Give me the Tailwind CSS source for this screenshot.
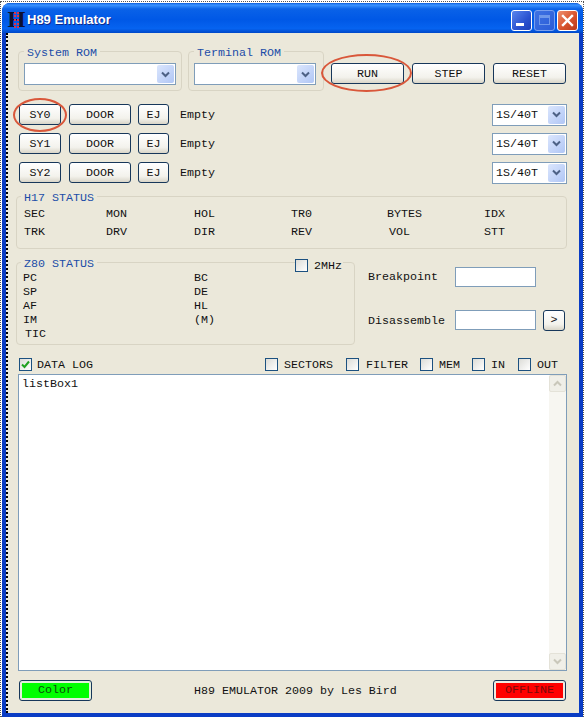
<!doctype html>
<html lang="en">
  <head>
    <meta charset="UTF-8">
    <title>H89 Emulator</title>
    <script src="https://cdn.jsdelivr.net/npm/@tailwindcss/browser@4"></script>
  </head>
  <body class="relative w-[585px] h-[718px] overflow-hidden bg-white font-['Liberation_Mono',monospace] text-[11.67px] leading-[14px] text-[#111]">
    <!-- screenshot selection edge -->
    <div class="absolute left-0 top-[1px] w-[584px] h-[716px] border border-dotted border-[#555]"></div>

    <!-- window -->
    <div class="relative ml-[2px] mt-[3px] w-[581px] h-[714px] flex flex-col rounded-t-[8px] bg-[#0a3cc4] overflow-hidden">
      <!-- title bar -->
      <div class="h-[30px] shrink-0 flex items-center pl-[6px] pr-[5px] pt-[4px] bg-[linear-gradient(180deg,#0a5ee0_0%,#3a93ff_7%,#0a62e8_20%,#0058e6_55%,#0663f0_85%,#0048c8_100%)]">
        <div class="relative w-[17px] h-[18px] flex items-center justify-center">
          <span class="font-['Liberation_Serif',serif] font-bold text-[23px] leading-[18px] text-[#0c1030]">H</span>
          <div class="absolute left-[6px] top-[1px] w-[5px] h-[16px] border-x-2 border-dotted border-[#d8344a]"></div>
        </div>
        <span class="ml-[2px] font-['Liberation_Sans',sans-serif] font-bold text-[13px] text-white [text-shadow:1px_1px_#0f2a89]">H89 Emulator</span>
        <div class="ml-auto flex gap-[2px]">
          <div class="relative w-[21px] h-[21px] rounded-[3px] border border-white bg-[linear-gradient(135deg,#5a86ee,#2a52d0_60%,#1c3fb8)]">
            <div class="absolute left-[4px] bottom-[4px] w-[8px] h-[3px] bg-white"></div>
          </div>
          <div class="w-[21px] h-[21px] rounded-[3px] border border-[#7aa0ee] bg-[linear-gradient(135deg,#3f72e2,#2a5cd8)] flex items-center justify-center">
            <div class="w-[11px] h-[10px] border border-[#6f98ea] border-t-[3px]"></div>
          </div>
          <div class="w-[21px] h-[21px] rounded-[3px] border border-white bg-[linear-gradient(135deg,#ee9070,#d8532c_55%,#b83a1c)] flex items-center justify-center">
            <svg width="13" height="13" viewBox="0 0 13 13"><path d="M2 2 L11 11 M11 2 L2 11" stroke="#fff" stroke-width="2.4" stroke-linecap="square" /></svg>
          </div>
        </div>
      </div>

      <!-- client area -->
      <div class="relative ml-[4px] w-[573px] h-[680px] shrink-0 bg-[#ebe8da] pl-[9px] pt-[18px] border-l-2 border-dotted border-black">
        <div class="-ml-px">
          <!-- ROM groups and run buttons -->
          <div class="flex items-start h-[40px]">
            <div class="relative ml-[2px] w-[164px] h-[40px] rounded-[4px] border border-[#d8d4c4]">
              <span class="absolute left-[5px] -top-[6px] px-[3px] bg-[#ebe8da] text-[#1c4da8]">System ROM</span>
              <div class="absolute left-[5px] top-[11px] w-[152px] h-[22px] border border-[#7f9db9] bg-white flex justify-end items-center pr-[1px]">
                <div class="w-[17px] h-[18px] rounded-[2px] bg-[linear-gradient(135deg,#dbe6fd,#b0c6f5)] flex items-center justify-center">
                  <svg width="9" height="7" viewBox="0 0 9 7"><path d="M1 1.5 L4.5 5 L8 1.5" fill="none" stroke="#4d6185" stroke-width="2" /></svg>
                </div>
              </div>
            </div>
            <div class="relative ml-[6px] w-[136px] h-[40px] rounded-[4px] border border-[#d8d4c4]">
              <span class="absolute left-[5px] -top-[6px] px-[3px] bg-[#ebe8da] text-[#1c4da8]">Terminal ROM</span>
              <div class="absolute left-[5px] top-[11px] w-[122px] h-[22px] border border-[#7f9db9] bg-white flex justify-end items-center pr-[1px]">
                <div class="w-[17px] h-[18px] rounded-[2px] bg-[linear-gradient(135deg,#dbe6fd,#b0c6f5)] flex items-center justify-center">
                  <svg width="9" height="7" viewBox="0 0 9 7"><path d="M1 1.5 L4.5 5 L8 1.5" fill="none" stroke="#4d6185" stroke-width="2" /></svg>
                </div>
              </div>
            </div>
            <button class="ml-[7px] mt-[12px] w-[73px] h-[21px] rounded-[3px] border border-[#17375a] bg-[linear-gradient(180deg,#fff,#f3f2ec_70%,#d9d5c8)]">RUN</button>
            <button class="ml-[8px] mt-[12px] w-[73px] h-[21px] rounded-[3px] border border-[#17375a] bg-[linear-gradient(180deg,#fff,#f3f2ec_70%,#d9d5c8)]">STEP</button>
            <button class="ml-[8px] mt-[12px] w-[73px] h-[21px] rounded-[3px] border border-[#17375a] bg-[linear-gradient(180deg,#fff,#f3f2ec_70%,#d9d5c8)]">RESET</button>
          </div>

          <!-- drive rows -->
          <div class="mt-[13px] flex flex-col gap-[8px]">
            <div class="flex items-center h-[21px]">
              <button class="ml-[3px] w-[42px] h-[21px] rounded-[3px] border border-[#17375a] bg-[linear-gradient(180deg,#fff,#f3f2ec_70%,#d9d5c8)]">SY0</button>
              <button class="ml-[8px] w-[62px] h-[21px] rounded-[3px] border border-[#17375a] bg-[linear-gradient(180deg,#fff,#f3f2ec_70%,#d9d5c8)]">DOOR</button>
              <button class="ml-[7px] w-[31px] h-[21px] rounded-[3px] border border-[#17375a] bg-[linear-gradient(180deg,#fff,#f3f2ec_70%,#d9d5c8)]">EJ</button>
              <span class="ml-[11px]">Empty</span>
              <div class="ml-auto mr-[12px] w-[75px] h-[22px] border border-[#7f9db9] bg-white flex items-center pl-[3px] pr-[1px]">
                <span>1S/40T</span>
                <div class="ml-auto w-[17px] h-[18px] rounded-[2px] bg-[linear-gradient(135deg,#dbe6fd,#b0c6f5)] flex items-center justify-center">
                  <svg width="9" height="7" viewBox="0 0 9 7"><path d="M1 1.5 L4.5 5 L8 1.5" fill="none" stroke="#4d6185" stroke-width="2" /></svg>
                </div>
              </div>
            </div>
            <div class="flex items-center h-[21px]">
              <button class="ml-[3px] w-[42px] h-[21px] rounded-[3px] border border-[#17375a] bg-[linear-gradient(180deg,#fff,#f3f2ec_70%,#d9d5c8)]">SY1</button>
              <button class="ml-[8px] w-[62px] h-[21px] rounded-[3px] border border-[#17375a] bg-[linear-gradient(180deg,#fff,#f3f2ec_70%,#d9d5c8)]">DOOR</button>
              <button class="ml-[7px] w-[31px] h-[21px] rounded-[3px] border border-[#17375a] bg-[linear-gradient(180deg,#fff,#f3f2ec_70%,#d9d5c8)]">EJ</button>
              <span class="ml-[11px]">Empty</span>
              <div class="ml-auto mr-[12px] w-[75px] h-[22px] border border-[#7f9db9] bg-white flex items-center pl-[3px] pr-[1px]">
                <span>1S/40T</span>
                <div class="ml-auto w-[17px] h-[18px] rounded-[2px] bg-[linear-gradient(135deg,#dbe6fd,#b0c6f5)] flex items-center justify-center">
                  <svg width="9" height="7" viewBox="0 0 9 7"><path d="M1 1.5 L4.5 5 L8 1.5" fill="none" stroke="#4d6185" stroke-width="2" /></svg>
                </div>
              </div>
            </div>
            <div class="flex items-center h-[21px]">
              <button class="ml-[3px] w-[42px] h-[21px] rounded-[3px] border border-[#17375a] bg-[linear-gradient(180deg,#fff,#f3f2ec_70%,#d9d5c8)]">SY2</button>
              <button class="ml-[8px] w-[62px] h-[21px] rounded-[3px] border border-[#17375a] bg-[linear-gradient(180deg,#fff,#f3f2ec_70%,#d9d5c8)]">DOOR</button>
              <button class="ml-[7px] w-[31px] h-[21px] rounded-[3px] border border-[#17375a] bg-[linear-gradient(180deg,#fff,#f3f2ec_70%,#d9d5c8)]">EJ</button>
              <span class="ml-[11px]">Empty</span>
              <div class="ml-auto mr-[12px] w-[75px] h-[22px] border border-[#7f9db9] bg-white flex items-center pl-[3px] pr-[1px]">
                <span>1S/40T</span>
                <div class="ml-auto w-[17px] h-[18px] rounded-[2px] bg-[linear-gradient(135deg,#dbe6fd,#b0c6f5)] flex items-center justify-center">
                  <svg width="9" height="7" viewBox="0 0 9 7"><path d="M1 1.5 L4.5 5 L8 1.5" fill="none" stroke="#4d6185" stroke-width="2" /></svg>
                </div>
              </div>
            </div>
          </div>

          <!-- H17 status -->
          <div class="relative mt-[13px] w-[551px] h-[53px] rounded-[4px] border border-[#d8d4c4] pl-[7px] pt-[10px]">
            <span class="absolute left-[4px] -top-[6px] px-[3px] bg-[#ebe8da] text-[#1c4da8]">H17 STATUS</span>
            <div class="grid grid-cols-[82px_88px_97px_96px_97px_1fr] gap-y-[4px]">
              <span>SEC</span><span>MON</span><span>HOL</span><span>TR0</span><span>BYTES</span><span>IDX</span>
              <span>TRK</span><span>DRV</span><span>DIR</span><span>REV</span><span class="ml-[2px]">VOL</span><span>STT</span>
            </div>
          </div>

          <!-- Z80 status and debug inputs -->
          <div class="mt-[13px] flex items-start h-[83px]">
            <div class="relative w-[339px] h-[83px] rounded-[4px] border border-[#d8d4c4] pl-[6px] pt-[8px]">
              <span class="absolute left-[4px] -top-[6px] px-[3px] bg-[#ebe8da] text-[#1c4da8]">Z80 STATUS</span>
              <div class="absolute left-[278px] -top-[5px] flex items-center bg-[#ebe8da] pr-[1px]">
                <div class="w-[13px] h-[13px] border border-[#1c5180] bg-[linear-gradient(135deg,#dcdcd7,#fff)]"></div>
                <span class="ml-[6px] mt-[1px]">2MHz</span>
              </div>
              <div class="grid grid-cols-[171px_1fr]">
                <span>PC</span><span>BC</span>
                <span>SP</span><span>DE</span>
                <span>AF</span><span>HL</span>
                <span>IM</span><span>(M)</span>
                <span class="ml-[2px]">TIC</span><span></span>
              </div>
            </div>
            <div class="ml-[13px] w-[198px] flex flex-col pt-[5px] gap-[23px]">
              <div class="flex items-center h-[20px]">
                <span class="w-[87px]">Breakpoint</span>
                <div class="w-[81px] h-[20px] border border-[#7f9db9] bg-white"></div>
              </div>
              <div class="flex items-center h-[20px]">
                <span class="w-[87px] mt-[2px]">Disassemble</span>
                <div class="w-[81px] h-[20px] border border-[#7f9db9] bg-white"></div>
                <button class="ml-[7px] w-[22px] h-[21px] rounded-[3px] border border-[#17375a] bg-[linear-gradient(180deg,#fff,#f3f2ec_70%,#d9d5c8)]">&gt;</button>
              </div>
            </div>
          </div>

          <!-- log options -->
          <div class="mt-[13px] flex items-center h-[13px]">
            <div class="ml-[3px] w-[13px] h-[13px] border border-[#1c5180] bg-[linear-gradient(135deg,#dcdcd7,#fff)] flex items-center justify-center">
              <svg width="9" height="9" viewBox="0 0 9 9"><path d="M1 4.5 L3.5 7 L8 1.5" fill="none" stroke="#21a121" stroke-width="2" /></svg>
            </div>
            <span class="ml-[5px]">DATA LOG</span>
            <div class="ml-[172px] w-[13px] h-[13px] border border-[#1c5180] bg-[linear-gradient(135deg,#dcdcd7,#fff)]"></div>
            <span class="ml-[6px]">SECTORS</span>
            <div class="ml-[13px] w-[13px] h-[13px] border border-[#1c5180] bg-[linear-gradient(135deg,#dcdcd7,#fff)]"></div>
            <span class="ml-[7px]">FILTER</span>
            <div class="ml-[12px] w-[13px] h-[13px] border border-[#1c5180] bg-[linear-gradient(135deg,#dcdcd7,#fff)]"></div>
            <span class="ml-[6px]">MEM</span>
            <div class="ml-[12px] w-[13px] h-[13px] border border-[#1c5180] bg-[linear-gradient(135deg,#dcdcd7,#fff)]"></div>
            <span class="ml-[6px]">IN</span>
            <div class="ml-[13px] w-[13px] h-[13px] border border-[#1c5180] bg-[linear-gradient(135deg,#dcdcd7,#fff)]"></div>
            <span class="ml-[6px]">OUT</span>
          </div>

          <!-- list box -->
          <div class="relative mt-[3px] ml-[2px] w-[549px] h-[297px] border border-[#7f9db9] bg-white pl-[3px] pt-[2px]">
            <span>listBox1</span>
            <div class="absolute right-0 top-0 bottom-0 w-[17px] bg-[#f7f6f1] flex flex-col justify-between">
              <div class="h-[17px] rounded-[2px] border border-[#e4e2d8] bg-[#f0efe8] flex items-center justify-center">
                <svg width="9" height="7" viewBox="0 0 9 7"><path d="M1 5.5 L4.5 2 L8 5.5" fill="none" stroke="#c9c7ba" stroke-width="2" /></svg>
              </div>
              <div class="h-[17px] rounded-[2px] border border-[#e4e2d8] bg-[#f0efe8] flex items-center justify-center">
                <svg width="9" height="7" viewBox="0 0 9 7"><path d="M1 1.5 L4.5 5 L8 1.5" fill="none" stroke="#c9c7ba" stroke-width="2" /></svg>
              </div>
            </div>
          </div>

          <!-- footer -->
          <div class="mt-[9px] flex items-center h-[21px]">
            <button class="ml-[3px] w-[73px] h-[21px] rounded-[3px] border border-[#17375a] p-[2px] bg-[#e4efdc]">
              <span class="block h-full bg-[#00ff00] leading-[15px] text-[#0a4a0a]">Color</span>
            </button>
            <span class="ml-[102px] w-[203px]">H89 EMULATOR 2009 by Les Bird</span>
            <button class="ml-[96px] w-[73px] h-[21px] rounded-[3px] border border-[#17375a] p-[2px] bg-[#efe9e0]">
              <span class="block h-full bg-[#ff0000] leading-[15px] text-[#7a0a0a]">OFFLINE</span>
            </button>
          </div>
        </div>
      </div>
    </div>

    <!-- red annotation rings -->
    <div class="absolute left-[13px] top-[98px] w-[54px] h-[34px] rounded-[50%] border-2 border-[#d9573a]"></div>
    <div class="absolute left-[321px] top-[54px] w-[91px] h-[38px] rounded-[50%] border-2 border-[#d9573a]"></div>
  </body>
</html>
